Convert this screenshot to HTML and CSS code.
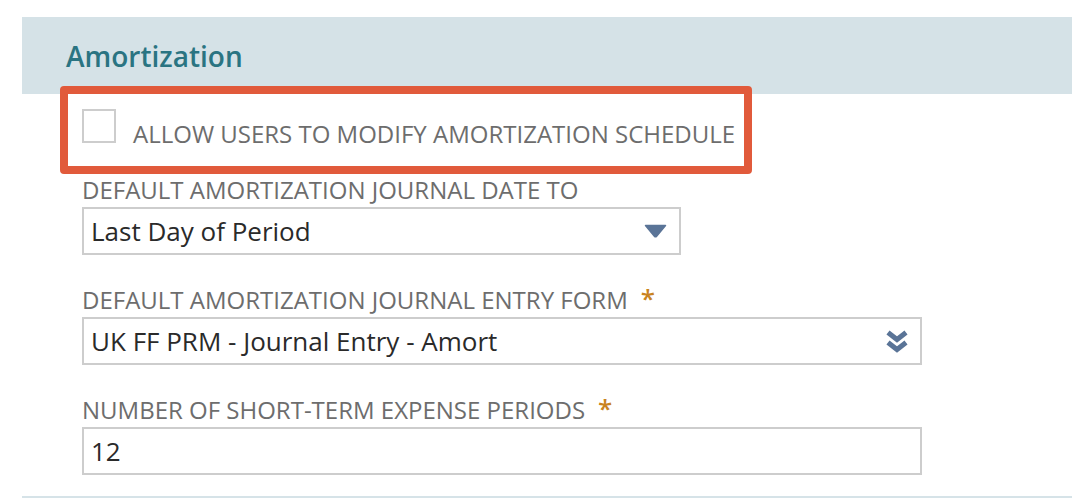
FILE: index.html
```html
<!DOCTYPE html>
<html lang="en">
<head>
<meta charset="utf-8">
<title>Amortization</title>
<link rel="stylesheet" href="styles.css">
</head>
<body>
<section class="panel">
  <header class="panel-head">
    <h2 class="panel-title">Amortization</h2>
  </header>
  <div class="highlight">
    <label class="check-row">
      <span class="checkbox"></span>
      <span class="check-label">ALLOW USERS TO MODIFY AMORTIZATION SCHEDULE</span>
    </label>
  </div>
  <div class="fields">
    <div class="field">
      <div class="field-label">DEFAULT AMORTIZATION JOURNAL DATE TO</div>
      <div class="control control-short">
        <span class="control-value">Last Day of Period</span>
        <svg class="icon-tri" width="23" height="14" viewBox="0 0 23 14"><path d="M1.5 1.5 H21.5 L12.6 12.2 Q11.5 13.4 10.4 12.2 Z" fill="#5a7497" stroke="#5a7497" stroke-width="1.5" stroke-linejoin="round"/></svg>
      </div>
    </div>
    <div class="field">
      <div class="field-label">DEFAULT AMORTIZATION JOURNAL ENTRY FORM<span class="req">*</span></div>
      <div class="control">
        <span class="control-value">UK FF PRM - Journal Entry - Amort</span>
        <svg class="icon-dbl" width="24" height="25" viewBox="0 0 24 25"><polyline points="3,3.5 12,10.5 21,3.5" fill="none" stroke="#5a7497" stroke-width="5"/><polyline points="3,13.5 12,20.5 21,13.5" fill="none" stroke="#5a7497" stroke-width="5"/></svg>
      </div>
    </div>
    <div class="field">
      <div class="field-label">NUMBER OF SHORT-TERM EXPENSE PERIODS<span class="req">*</span></div>
      <div class="control">
        <span class="control-value">12</span>
      </div>
    </div>
  </div>
</section>
</body>
</html>
```

FILE: styles.css
```css
html, body {
  margin: 0;
  padding: 0;
  background: #ffffff;
}

body {
  font-family: "Open Sans", "Noto Sans", sans-serif;
  width: 1072px;
  height: 498px;
  overflow: hidden;
}

.panel {
  margin: 17px 0 0 22px;
  padding-bottom: 21px;
  border-bottom: 2px solid #d6e3e8;
}

.panel-head {
  background: #d5e2e7;
  height: 77px;
  box-sizing: border-box;
  padding: 22px 0 0 44px;
}

.panel-title {
  margin: 0;
  font-size: 28px;
  line-height: 34px;
  font-weight: 600;
  color: #2a7482;
}

.highlight {
  margin: -8px 0 0 38px;
  width: 692px;
  height: 88px;
  box-sizing: border-box;
  border: 8px solid #e15a3b;
  border-radius: 4px;
  background: #ffffff;
  padding: 15px 14px 0 14px;
  position: relative;
}

.check-row {
  display: flex;
  align-items: flex-start;
  gap: 17px;
}

.checkbox {
  width: 34px;
  height: 34px;
  box-sizing: border-box;
  border: 2px solid #cdcdcd;
  background: #fff;
  flex: none;
}

.check-label {
  padding-top: 8px;
  font-size: 24px;
  line-height: 34px;
  color: #6d6d6d;
  white-space: nowrap;
}

.fields {
  padding: 5px 0 0 60px;
  display: flex;
  flex-direction: column;
  gap: 34px;
}

.field {
  display: flex;
  flex-direction: column;
  gap: 6px;
}

.field-label {
  font-size: 24px;
  line-height: 22px;
  color: #6d6d6d;
  white-space: nowrap;
}

.req {
  font-size: 26px;
  line-height: 18px;
  font-weight: 600;
  color: #c98320;
  margin-left: 13px;
  vertical-align: top;
}

.control {
  width: 840px;
  height: 48px;
  box-sizing: border-box;
  border: 2px solid #cdcdcd;
  background: #fff;
  display: flex;
  align-items: center;
  justify-content: space-between;
  padding: 0 11px 0 7px;
}

.control-short {
  width: 599px;
  padding-right: 12px;
}

.control-value {
  font-size: 26px;
  line-height: 34px;
  color: #2a2a2a;
  white-space: nowrap;
}

.icon-tri {
  display: block;
  flex: none;
}

.icon-dbl {
  display: block;
  flex: none;
}
```
